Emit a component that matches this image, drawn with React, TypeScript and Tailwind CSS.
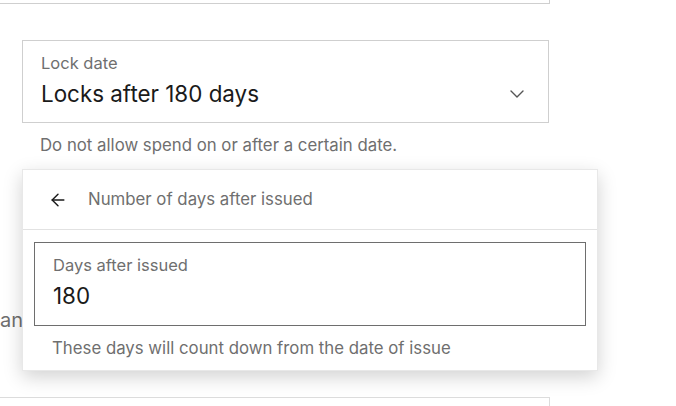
import React from "react";
import { ArrowLeft, ChevronDown } from "lucide-react";

export default function App() {
  return (
    <div
      className="relative w-[676px] h-[406px] overflow-hidden bg-white"
      style={{ fontFamily: "Inter, 'Noto Sans', sans-serif" }}
    >
      <div className="flex flex-col">
        <div className="ml-[-10px] mt-[-20px] w-[560px] h-[24px] border border-[#cfcfcf]" />
        <div className="ml-[22px] mt-[36px] w-[527px] h-[83px] border border-[#cfcfcf] flex flex-col pl-[18px] pr-[19px] pt-[11px]">
          <span className="text-[16.5px] leading-[22px] text-[#6f6f6f]">Lock date</span>
          <div className="mt-[5px] flex items-center justify-between">
            <span className="text-[22.4px] leading-[30px] text-[#1a1a1a]">Locks after 180 days</span>
            <ChevronDown size={24} strokeWidth={1.4} className="text-[#555]" />
          </div>
        </div>
        <p className="ml-[40px] mt-[10px] text-[16.8px] leading-[24px] text-[#6f6f6f]">
          Do not allow spend on or after a certain date.
        </p>
        <p className="ml-0 mt-[149px] text-[20px] leading-[28px] text-[#6f6f6f] whitespace-nowrap">
          and more
        </p>
        <div className="ml-[-10px] mt-[63px] w-[560px] h-[40px] border border-[#dcdcdc]" />
      </div>

      <div className="absolute left-[22px] top-[169px] w-[576px] bg-white border border-[#e8e8e8] shadow-[0_6px_18px_rgba(0,0,0,0.18)] flex flex-col">
        <div className="h-[60px] flex items-center pl-[25px] gap-[20px] border-b border-[#e2e2e2]">
          <ArrowLeft size={20} strokeWidth={1.7} className="text-[#1a1a1a]" />
          <span className="text-[16.8px] text-[#6f6f6f]">Number of days after issued</span>
        </div>
        <div className="px-[11px] pt-[12px] pb-[10px] flex flex-col">
          <div className="h-[84px] border border-[#6e6e6e] pl-[18px] pt-[11px] flex flex-col">
            <span className="text-[16.5px] leading-[22px] text-[#6f6f6f]">Days after issued</span>
            <span className="mt-[5px] text-[22.4px] leading-[30px] text-[#1a1a1a]">180</span>
          </div>
          <p className="mt-[10px] pl-[18px] text-[16.8px] leading-[24px] text-[#6f6f6f]">
            These days will count down from the date of issue
          </p>
        </div>
      </div>
    </div>
  );
}
